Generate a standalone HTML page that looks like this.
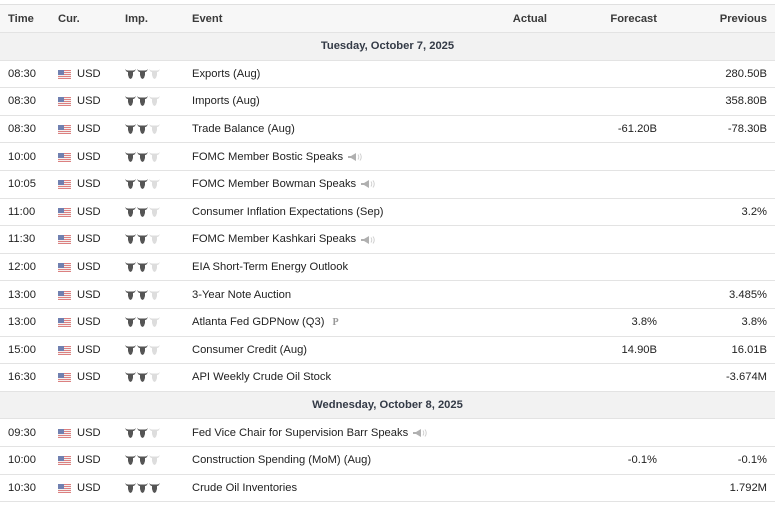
<!DOCTYPE html>
<html><head><meta charset="utf-8"><style>
*{margin:0;padding:0;box-sizing:border-box}
body{width:775px;height:505px;background:#fff;font-family:"Liberation Sans",Arial,sans-serif;font-size:11.2px;color:#222;position:relative;overflow:hidden}
.r{position:absolute;left:0;width:775px;border-bottom:1px solid #e3e3e3}
.c{position:absolute;top:50%;transform:translateY(-50%);white-space:nowrap}
.hd{background:#f7f7f7;color:#333;font-weight:bold;border-top:1px solid #e0e0e0}
.hd .c{color:#3a3a3a}
.dt{background:#f2f2f2}
.dt .c{left:0;width:775px;text-align:center;font-weight:bold;color:#333a46}
.flag{position:absolute;left:58px;top:50%;margin-top:-4px;width:13px;height:9px;background:repeating-linear-gradient(#dc8080 0 1px,#f4f0f0 1px 2px)}
.flag:before{content:"";position:absolute;left:0;top:0;width:6px;height:5px;background:#7080b0}
.bulls{position:absolute;left:125px;top:50%;margin-top:-5px;height:10px;display:flex}
.bulls svg{display:block;margin-right:1px}
.sp{display:inline-block;vertical-align:middle;margin-left:5px}
</style></head><body>
<svg width="0" height="0" style="position:absolute"><defs>
<symbol id="b" viewBox="0 0 11 10"><path d="M0 0 L1.2 2.2 L2.5 3 L3 3 L3 6 L4 9 L5.5 10 L7 9 L8 6 L8 3 L8.5 3 L9.8 2.2 L11 0 L9.5 1.2 L8 1.5 L3 1.5 L1.5 1.2 Z"/></symbol>
</defs></svg>
<div id="c"></div>
<script>
var rows=[
["h"],
["d","Tuesday, October 7, 2025"],
["08:30","Exports (Aug)","","","280.50B",2],
["08:30","Imports (Aug)","","","358.80B",2],
["08:30","Trade Balance (Aug)","","-61.20B","-78.30B",2],
["10:00","FOMC Member Bostic Speaks","","","",2,"s"],
["10:05","FOMC Member Bowman Speaks","","","",2,"s"],
["11:00","Consumer Inflation Expectations (Sep)","","","3.2%",2],
["11:30","FOMC Member Kashkari Speaks","","","",2,"s"],
["12:00","EIA Short-Term Energy Outlook","","","",2],
["13:00","3-Year Note Auction","","","3.485%",2],
["13:00","Atlanta Fed GDPNow (Q3)","","3.8%","3.8%",2,"p"],
["15:00","Consumer Credit (Aug)","","14.90B","16.01B",2],
["16:30","API Weekly Crude Oil Stock","","","-3.674M",2],
["d","Wednesday, October 8, 2025"],
["09:30","Fed Vice Chair for Supervision Barr Speaks","","","",2,"s"],
["10:00","Construction Spending (MoM) (Aug)","","-0.1%","-0.1%",2],
["10:30","Crude Oil Inventories","","","1.792M",3]
];
var h='',y=5;
rows.forEach(function(r,i){
 var ht=i==0?28:27.6;
 if(r[0]=="h"){
  h+='<div class="r hd" style="top:'+(y-1)+'px;height:'+(ht+1)+'px"><span class="c" style="left:8px">Time</span><span class="c" style="left:58px">Cur.</span><span class="c" style="left:125px">Imp.</span><span class="c" style="left:192px">Event</span><span class="c" style="right:228px">Actual</span><span class="c" style="right:118px">Forecast</span><span class="c" style="right:8px">Previous</span></div>';
 }else if(r[0]=="d"){
  h+='<div class="r dt" style="top:'+y+'px;height:'+ht+'px"><span class="c">'+r[1]+'</span></div>';
 }else{
  var b='';for(var k=0;k<3;k++){b+='<svg width="11" height="10" fill="'+(k<r[5]?'#555':'#ddd')+'"><use href="#b"/></svg>';}
  var ex='';
  if(r[6]=="s")ex='<svg class="sp" width="14" height="8" viewBox="0 0 14 8"><path d="M0 3h3l5-3v8l-5-3H0z" fill="#b0b0b0"/><path d="M10 1.5q1.5 2.5 0 5M12 0.5q2.5 3.5 0 7" stroke="#d0d0d0" fill="none"/></svg>';
  if(r[6]=="p")ex='<span style="margin-left:8px;color:#999;font-family:\'Liberation Serif\',serif;font-size:10px;font-weight:bold">P</span>';
  h+='<div class="r" style="top:'+y+'px;height:'+ht+'px"><span class="c" style="left:8px">'+r[0]+'</span><span class="flag"></span><span class="c" style="left:77px">USD</span><span class="bulls">'+b+'</span><span class="c" style="left:192px">'+r[1]+ex+'</span><span class="c" style="right:228px">'+r[2]+'</span><span class="c" style="right:118px">'+r[3]+'</span><span class="c" style="right:8px">'+r[4]+'</span></div>';
 }
 y+=ht;
});
document.getElementById('c').innerHTML=h;
</script>
</body></html>
